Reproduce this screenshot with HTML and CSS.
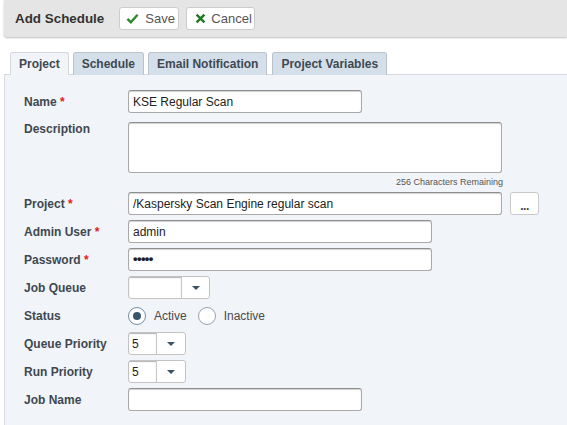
FILE: index.html
```html
<!DOCTYPE html>
<html>
<head>
<meta charset="utf-8">
<link rel="stylesheet" href="styles.css">
</head>
<body>
<div class="header">
  <div class="title">Add Schedule</div>
  <button class="btn btn-save"><svg class="ico" viewBox="0 0 14 14" width="13" height="13"><path d="M1.5 7.5 L5.2 11 L12.5 3" fill="none" stroke="#2b8a2b" stroke-width="2.6"/></svg><span>Save</span></button>
  <button class="btn btn-cancel"><svg class="ico" viewBox="0 0 14 14" width="11" height="11"><path d="M2 2 L12 12 M12 2 L2 12" fill="none" stroke="#1f7a1f" stroke-width="3"/></svg><span>Cancel</span></button>
</div>
<div class="tabs">
  <div class="tab active">Project</div>
  <div class="tab">Schedule</div>
  <div class="tab">Email Notification</div>
  <div class="tab">Project Variables</div>
</div>
<div class="panel">
  <div class="row r-name">
    <label class="lbl">Name <span class="req">*</span></label>
    <div class="field w234">KSE Regular Scan</div>
  </div>
  <div class="row r-desc">
    <label class="lbl">Description</label>
    <div class="desc-wrap">
      <div class="field area w374"></div>
      <div class="remain">256 Characters Remaining</div>
    </div>
  </div>
  <div class="row">
    <label class="lbl">Project <span class="req">*</span></label>
    <div class="field w374">/Kaspersky Scan Engine regular scan</div>
    <button class="dots">...</button>
  </div>
  <div class="row">
    <label class="lbl">Admin User <span class="req">*</span></label>
    <div class="field w304">admin</div>
  </div>
  <div class="row">
    <label class="lbl">Password <span class="req">*</span></label>
    <div class="field w304 pw">•••••</div>
  </div>
  <div class="row">
    <label class="lbl">Job Queue</label>
    <div class="select">
      <div class="sel-val w53"></div>
      <div class="sel-arrow w27"><span class="caret"></span></div>
    </div>
  </div>
  <div class="row">
    <label class="lbl">Status</label>
    <div class="radios">
      <span class="radio on"></span><span class="rtext">Active</span>
      <span class="radio"></span><span class="rtext">Inactive</span>
    </div>
  </div>
  <div class="row">
    <label class="lbl">Queue Priority</label>
    <div class="select">
      <div class="sel-val w28">5</div>
      <div class="sel-arrow w28"><span class="caret"></span></div>
    </div>
  </div>
  <div class="row">
    <label class="lbl">Run Priority</label>
    <div class="select">
      <div class="sel-val w28">5</div>
      <div class="sel-arrow w28"><span class="caret"></span></div>
    </div>
  </div>
  <div class="row">
    <label class="lbl">Job Name</label>
    <div class="field w234"></div>
  </div>
</div>
</body>
</html>
```
FILE: styles.css
```css
* { box-sizing: border-box; }
html, body { margin: 0; padding: 0; background: #fff; }
body {
  font-family: "Liberation Sans", Arial, sans-serif;
  color: #333;
  height: 425px;
  overflow: hidden;
}
.header {
  height: 37px;
  margin-left: 4px;
  background: #e5e5e5;
  border-bottom-left-radius: 3px;
  box-shadow: 0 1px 2px rgba(0,0,0,0.25);
  display: flex;
  align-items: center;
  padding-left: 11px;
}
.title {
  font-weight: bold;
  font-size: 13.4px;
  color: #333;
  margin-right: 15px;
}
.btn {
  height: 23px;
  background: #fff;
  border: 1px solid #ccc;
  border-radius: 3px;
  font-family: "Liberation Sans", Arial, sans-serif;
  font-size: 13px;
  color: #555;
  display: flex;
  align-items: center;
  padding: 0 0 0 6px;
  margin-right: 7px;
}
.btn-save { width: 60px; }
.btn-cancel { width: 69px; padding-left: 8px; }
.ico { margin-right: 6px; }
.btn-cancel .ico { margin-right: 5px; }

.tabs {
  display: flex;
  margin-top: 15px;
  padding-left: 10px;
  height: 22px;
  position: relative;
  z-index: 1;
}
.tab {
  height: 23px;
  background: #d4dfea;
  border: 1px solid #b9c4cf;
  border-bottom: none;
  border-radius: 3px 3px 0 0;
  font-weight: bold;
  font-size: 12px;
  color: #3f4952;
  padding: 4px 8px 0;
  margin-right: 4px;
}
.tab.active {
  background: #f1f4f9;
  border-color: #d2d8de;
  height: 23px;
}
.tabs .tab:nth-child(3) { margin-right: 5px; }
.panel {
  margin-left: 4px;
  background: #f1f4f9;
  border-left: 1px solid #d8dde3;
  border-top: 1px solid #d3d9df;
  height: 360px;
  padding: 15px 0 0 19px;
}
.row {
  display: flex;
  align-items: center;
  margin-bottom: 5px;
}
.r-name { margin-bottom: 9px; }
.r-desc { align-items: flex-start; margin-bottom: 0; }
.lbl {
  width: 104px;
  flex: none;
  font-weight: bold;
  font-size: 12px;
  color: #3f4850;
}
.r-desc .lbl { padding-top: 0; }
.req { color: #e02020; }
.field {
  height: 23px;
  background: #fff;
  border: 1px solid #a9a9a9;
  border-top-color: #8e8e8e;
  border-radius: 3px;
  box-shadow: inset 0 1px 1px rgba(0,0,0,0.18);
  font-size: 12px;
  color: #222;
  padding: 4px 0 0 4px;
  white-space: nowrap;
  overflow: hidden;
}
.pw { font-size: 13px; padding-top: 2px; letter-spacing: -0.6px; font-weight: bold; }
.area { height: 51px; }
.w234 { width: 234px; }
.w374 { width: 374px; }
.w304 { width: 304px; }
.desc-wrap { display: flex; flex-direction: column; }
.remain {
  text-align: right;
  font-size: 9px;
  color: #555;
  height: 19px;
  padding-top: 4px;
  margin-right: -1px;
}
.dots {
  width: 29px;
  height: 23px;
  margin-left: 8px;
  background: #fff;
  border: 1px solid #c9c9c9;
  border-radius: 3px;
  font-family: "Liberation Sans", Arial, sans-serif;
  font-size: 12px;
  font-weight: bold;
  color: #444;
  padding: 5px 0 0;
  letter-spacing: -0.5px;
  margin-top: -1px;
}
.select {
  display: flex;
  height: 23px;
  border: 1px solid #c3c3c3;
  border-radius: 3px;
  background: #fff;
  overflow: hidden;
}
.sel-val {
  height: 100%;
  border-right: 1px solid #c8c8c8;
  box-shadow: inset 0 1px 1px rgba(0,0,0,0.3);
  font-size: 12px;
  color: #222;
  padding: 4px 0 0 3px;
}
.w53 { width: 53px; }
.w28 { width: 28px; }
.w27 { width: 27px; }
.sel-arrow {
  height: 100%;
  display: flex;
  align-items: center;
  justify-content: center;
}
.caret {
  width: 0; height: 0;
  border-left: 4px solid transparent;
  border-right: 4px solid transparent;
  border-top: 4px solid #3a5468;
  margin-top: 1px;
}
.radios {
  display: flex;
  align-items: center;
  height: 23px;
}
.radio {
  width: 18px;
  height: 18px;
  border-radius: 50%;
  border: 1px solid #9aa3ab;
  background: #fff;
  display: flex;
  align-items: center;
  justify-content: center;
}
.radio.on { border-color: #6f8ea6; }
.radio.on::after {
  content: "";
  width: 8px;
  height: 8px;
  border-radius: 50%;
  background: #3a566b;
}
.rtext {
  font-size: 12px;
  color: #4a4a4a;
  margin: 0 11px 0 8px;
}
```
